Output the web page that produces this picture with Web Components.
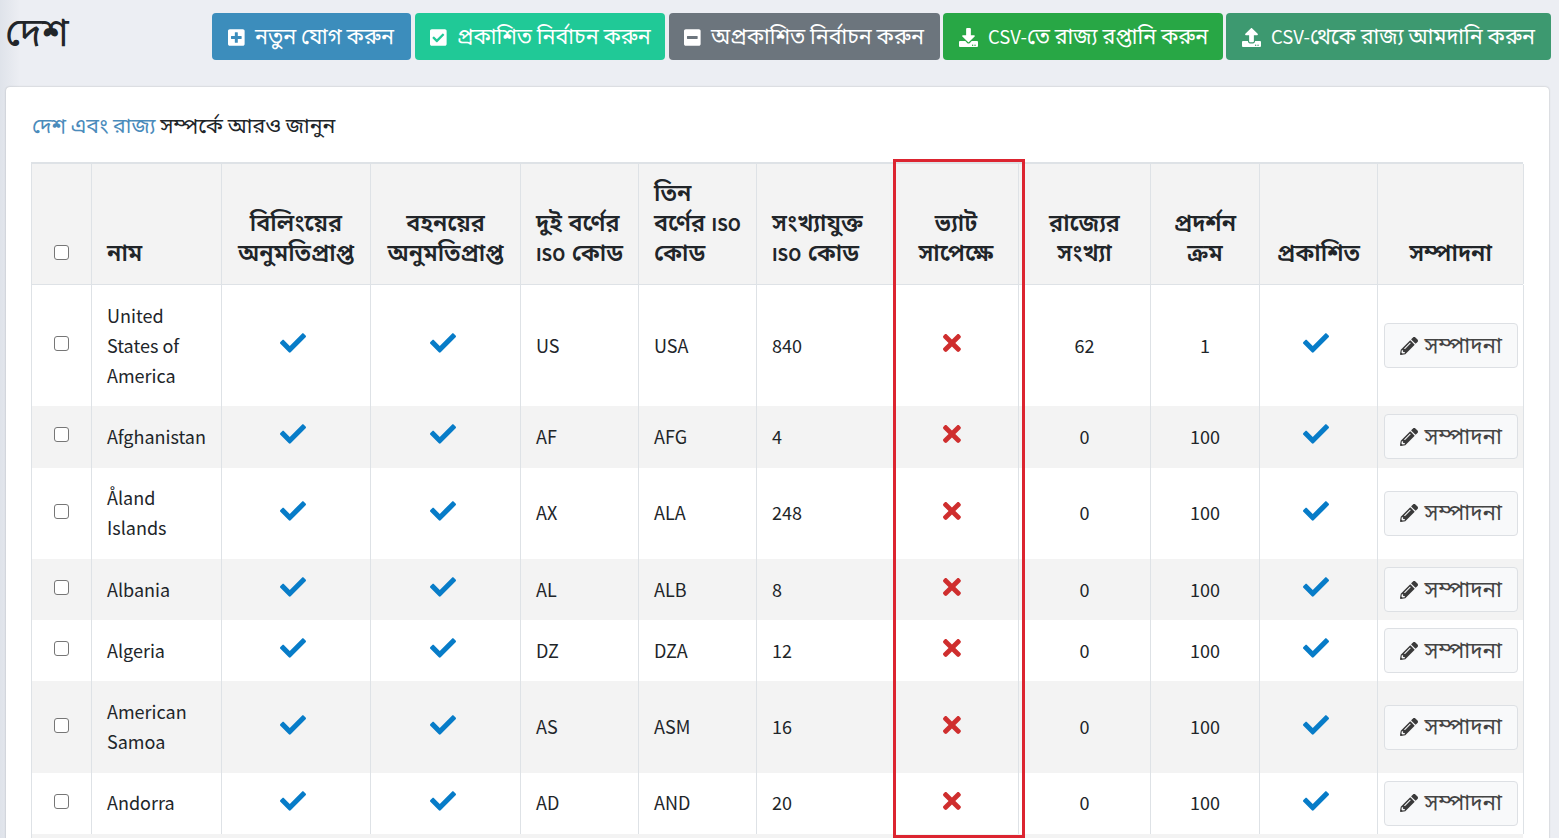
<!DOCTYPE html>
<html lang="bn">
<head>
<meta charset="utf-8">
<title>দেশ</title>
<style>
html,body{margin:0;height:100%;overflow:hidden}
body{background:#eceef3;font-family:"Noto Sans CJK SC","Noto Sans Bengali","Noto Sans",sans-serif}
</style>
</head>
<body>
<country-page></country-page>
<script>
const ICONS={
plus:['0 0 448 512','M400 32H48C21.500 32 0 53.500 0 80v352c0 26.500 21.500 48 48 48h352c26.500 0 48-21.500 48-48V80c0-26.500-21.500-48-48-48zm-32 252c0 6.600-5.400 12-12 12h-92v92c0 6.600-5.400 12-12 12h-56c-6.600 0-12-5.400-12-12v-92H92c-6.600 0-12-5.400-12-12v-56c0-6.600 5.400-12 12-12h92v-92c0-6.600 5.400-12 12-12h56c6.600 0 12 5.400 12 12v92h92c6.600 0 12 5.400 12 12v56z'],
tick:['0 0 448 512','M400 480H48c-26.500 0-48-21.500-48-48V80c0-26.500 21.500-48 48-48h352c26.500 0 48 21.500 48 48v352c0 26.500-21.500 48-48 48zm-204.700-98.100l184-184c6.200-6.200 6.200-16.400 0-22.600l-22.600-22.600c-6.200-6.200-16.400-6.200-22.600 0L184 302.700l-70.100-70.100c-6.200-6.200-16.400-6.200-22.600 0l-22.600 22.600c-6.200 6.200-6.200 16.400 0 22.600l104 104c6.200 6.300 16.400 6.300 22.600.1z'],
minus:['0 0 448 512','M400 32H48C21.500 32 0 53.500 0 80v352c0 26.500 21.500 48 48 48h352c26.500 0 48-21.500 48-48V80c0-26.500-21.500-48-48-48zM92 296c-6.600 0-12-5.400-12-12v-56c0-6.600 5.400-12 12-12h264c6.600 0 12 5.400 12 12v56c0 6.600-5.400 12-12 12H92z'],
down:['0 0 512 512','M216 0h80c13.300 0 24 10.700 24 24v168h87.700c17.800 0 26.700 21.500 14.100 34.100L269.700 378.300c-7.500 7.500-19.800 7.500-27.300 0L90.100 226.100c-12.600-12.600-3.700-34.100 14.100-34.100H192V24c0-13.300 10.700-24 24-24zm296 376v112c0 13.300-10.700 24-24 24H24c-13.300 0-24-10.700-24-24V376c0-13.300 10.700-24 24-24h146.700l49 49c20.100 20.100 52.500 20.100 72.600 0l49-49H488c13.300 0 24 10.700 24 24zm-124 88c0-11-9-20-20-20s-20 9-20 20 9 20 20 20 20-9 20-20zm64 0c0-11-9-20-20-20s-20 9-20 20 9 20 20 20 20-9 20-20z'],
up:['0 0 512 512','M296 384h-80c-13.300 0-24-10.700-24-24V192h-87.700c-17.800 0-26.700-21.500-14.100-34.100L242.300 5.700c7.500-7.500 19.800-7.500 27.300 0l152.200 152.200c12.600 12.600 3.700 34.100-14.100 34.100H320v168c0 13.300-10.700 24-24 24zm216-8v112c0 13.300-10.700 24-24 24H24c-13.300 0-24-10.700-24-24V376c0-13.300 10.700-24 24-24h136v8c0 30.900 25.100 56 56 56h80c30.900 0 56-25.100 56-56v-8h136c13.300 0 24 10.700 24 24zm-124 88c0-11-9-20-20-20s-20 9-20 20 9 20 20 20 20-9 20-20zm64 0c0-11-9-20-20-20s-20 9-20 20 9 20 20 20 20-9 20-20z'],
check:['0 0 512 512','M173.898 439.404l-166.400-166.400c-9.997-9.997-9.997-26.206 0-36.204l36.203-36.204c9.997-9.998 26.207-9.998 36.204 0L192 312.690 432.095 72.596c9.997-9.997 26.207-9.997 36.204 0l36.203 36.204c9.997 9.997 9.997 26.206 0 36.204l-294.400 294.401c-9.998 9.997-26.207 9.997-36.204-.001z'],
times:['0 0 352 512','M242.720 256l100.070-100.070c12.280-12.280 12.280-32.190 0-44.480l-22.240-22.240c-12.280-12.280-32.190-12.280-44.480 0L176 189.280 75.930 89.210c-12.280-12.280-32.190-12.280-44.480 0L9.210 111.450c-12.280 12.280-12.280 32.190 0 44.480L109.280 256 9.210 356.070c-12.280 12.280-12.280 32.190 0 44.480l22.240 22.240c12.280 12.280 32.200 12.280 44.480 0L176 322.720l100.070 100.070c12.280 12.280 32.200 12.280 44.480 0l22.240-22.240c12.280-12.280 12.280-32.190 0-44.480L242.720 256z'],
pencil:['0 0 512 512','M497.900 142.100l-46.100 46.100c-4.700 4.700-12.300 4.700-17 0l-111-111c-4.700-4.700-4.700-12.300 0-17l46.100-46.100c18.700-18.700 49.100-18.700 67.900 0l60.100 60.100c18.800 18.700 18.800 49.100 0 67.900zM284.200 99.800L21.600 362.400.4 483.900c-2.900 16.400 11.400 30.600 27.800 27.800l121.500-21.300 262.600-262.600c4.700-4.700 4.700-12.300 0-17l-111-111c-4.800-4.700-12.400-4.700-17.100 0zM124.100 339.900c-5.500-5.500-5.500-14.300 0-19.800l154-154c5.500-5.500 14.300-5.500 19.800 0s5.500 14.300 0 19.800l-154 154c-5.500 5.500-14.300 5.500-19.800 0zM88 424h48v36.300l-64.500 11.300-31.100-31.100L51.700 376H88v48z']};
const define=(name,render)=>customElements.define(name,class extends HTMLElement{
  connectedCallback(){ if(!this.shadowRoot){this.attachShadow({mode:'open'}).innerHTML=render(this);} }
});
define('ui-icon',el=>{const [box,d]=ICONS[el.getAttribute('name')];
  return `<style>:host{display:inline-flex;flex:none}svg{display:block;height:var(--icon,19px);width:auto;fill:currentColor}</style><svg viewBox="${box}"><path d="${d}"/></svg>`});
define('action-button',el=>`<style>
:host{display:flex;box-sizing:border-box;align-items:center;height:47px;border-radius:4px;color:#fff;font-size:21.5px;line-height:30px;padding-left:16px;white-space:nowrap;flex:none}
ui-icon{--icon:19px;width:19px;margin-right:8px;padding-top:1px}
span{padding-bottom:3px}::slotted(b){font-weight:400;font-size:18.5px;margin-left:2px}
</style><ui-icon name="${el.getAttribute('icon')}"></ui-icon><span><slot></slot></span>`);
define('edit-button',()=>`<style>
:host{display:flex;box-sizing:border-box;align-items:center;width:134px;height:45px;border:1px solid #dde0e4;border-radius:4px;background:#f8f9fa;color:#444;padding-left:15px;font-size:22.4px;line-height:30px;white-space:nowrap}
ui-icon{--icon:18px;margin-right:7px;color:#3a3a3a}span{padding-bottom:6px}
</style><ui-icon name="pencil"></ui-icon><span><slot></slot></span>`);
define('check-box',()=>`<style>:host{display:block;box-sizing:border-box;width:15px;height:15px;border:1px solid #767676;border-radius:3px;background:#fff}</style>`);
const ROWCSS='display:grid;grid-template-columns:60px 130px 149px 150px 118px 118px 137px 125px 132px 109px 118px 146px;';
const CELL='box-sizing:border-box;border-right:1px solid #dee2e6;display:flex;';
define('table-head',()=>{
 const cols=[['নাম',0],['বিলিংয়ের<br>অনুমতিপ্রাপ্ত',1],['বহনয়ের<br>অনুমতিপ্রাপ্ত',1],['দুই বর্ণের<br><b>ISO</b> কোড',0],['তিন<br>বর্ণের <b>ISO</b><br>কোড',0],['সংখ্যাযুক্ত<br><b>ISO</b> কোড',0],['ভ্যাট<br>সাপেক্ষে',1],['রাজ্যের<br>সংখ্যা',1],['প্রদর্শন<br>ক্রম',1],['প্রকাশিত',1],['সম্পাদনা',1]];
 return `<style>:host{${ROWCSS}height:123.2px;box-sizing:border-box;border-top:2px solid #dee2e6;border-bottom:1px solid #dee2e6;background:#f3f3f3;font-family:"Liberation Sans","Noto Sans Bengali",sans-serif;font-weight:600;font-size:23.4px}
 .c{${CELL}align-items:flex-end;padding:0 0 16px 15px;white-space:nowrap}.m{justify-content:center;text-align:center;padding:0 0 16px}check-box{margin-bottom:8px}b{font-family:"Noto Sans CJK SC",sans-serif;font-size:17px;font-weight:700;line-height:1}</style>
 <div class="c m"><check-box></check-box></div>${cols.map(([t,m])=>`<div class="c${m?' m':''}"><span>${t}</span></div>`).join('')}`});
define('country-row',el=>{
 const [two,three,num,states,order]=el.dataset.v.split(',');
 const yes='<ui-icon class="y" name="check"></ui-icon>';
 return `<style>:host{${ROWCSS}}
 .c{${CELL}align-items:center;padding:0 15px 2px}.m{justify-content:center;padding:0}.t{padding:0 0 2px}
 ui-icon{margin-bottom:5px}.y{--icon:26px;color:#077cc8;margin-right:6px}.n{--icon:26px;color:#cf2e2e;margin-right:8px}check-box{margin-bottom:4px}</style>
 <div class="c m"><check-box></check-box></div><div class="c"><slot></slot></div><div class="c m">${yes}</div><div class="c m">${yes}</div>
 <div class="c">${two}</div><div class="c">${three}</div><div class="c">${num}</div><div class="c m"><ui-icon class="n" name="times"></ui-icon></div>
 <div class="c m t">${states}</div><div class="c m t">${order}</div><div class="c m"><ui-icon class="y" name="check"></ui-icon></div><div class="c m"><edit-button>সম্পাদনা</edit-button></div>`});
define('country-table',()=>{
 const rows=[['United<br>States of<br>America','US,USA,840,62,1',121],['Afghanistan','AF,AFG,4,0,100',61.4],['Åland<br>Islands','AX,ALA,248,0,100',91.2],['Albania','AL,ALB,8,0,100',61.6],['Algeria','DZ,DZA,12,0,100',61],['American<br>Samoa','AS,ASM,16,0,100',91.4],['Andorra','AD,AND,20,0,100',61.2]];
 return `<style>:host{display:block;position:relative;width:1492px;height:700px;box-sizing:border-box;border-left:1px solid #dee2e6;font-size:18px;line-height:30px;color:#212529}
 country-row:nth-of-type(even){background:#f3f3f3}.last{height:20px;background:#f3f3f3}
 .mark{position:absolute;left:861px;top:-3px;width:132px;height:679px;box-sizing:border-box;border:3px solid #dc2430}</style>
 <table-head></table-head>${rows.map(r=>`<country-row data-v="${r[1]}" style="height:${r[2]}px"><span>${r[0]}</span></country-row>`).join('')}<div class="last"></div><div class="mark"></div>`});
define('country-page',()=>`<style>
:host{display:block;height:838px;overflow:hidden;box-sizing:border-box;background:linear-gradient(90deg,#dfe3ea 0,#eceef3 20px);color:#212529}
header{display:flex;height:87px;box-sizing:border-box;padding:13px 8px 0 5px;justify-content:space-between}
h1{margin:-4px 0 0;font-size:40px;font-weight:400;line-height:40px}
nav{display:flex;gap:4px}
main{box-sizing:border-box;width:1543px;height:780px;margin-left:6px;padding:22px 0 0 25px;background:#fff;border-radius:4px;box-shadow:0 0 2px rgba(0,0,0,.25)}
p{margin:0 0 23px 1px;font-size:21.3px;line-height:30px;height:30px}a{color:#4a8bbb}
</style>
<header><h1>দেশ</h1><nav>
<action-button icon="plus" style="width:199px;background:#3c8dbc">নতুন যোগ করুন</action-button>
<action-button icon="tick" style="width:250px;background:#20c997;padding-left:15px">প্রকাশিত নির্বাচন করুন</action-button>
<action-button icon="minus" style="width:271px;background:#6c757d;padding-left:15px">অপ্রকাশিত নির্বাচন করুন</action-button>
<action-button icon="down" style="width:280px;background:#28a745;margin-left:-1px"><b>CSV-</b>তে রাজ্য রপ্তানি করুন</action-button>
<action-button icon="up" style="width:325px;background:#3d9970;margin-left:-1px"><b>CSV-</b>থেকে রাজ্য আমদানি করুন</action-button>
</nav></header>
<main><p><a>দেশ এবং রাজ্য</a> সম্পর্কে আরও জানুন</p><country-table></country-table></main>`);
</script>
</body>
</html>
